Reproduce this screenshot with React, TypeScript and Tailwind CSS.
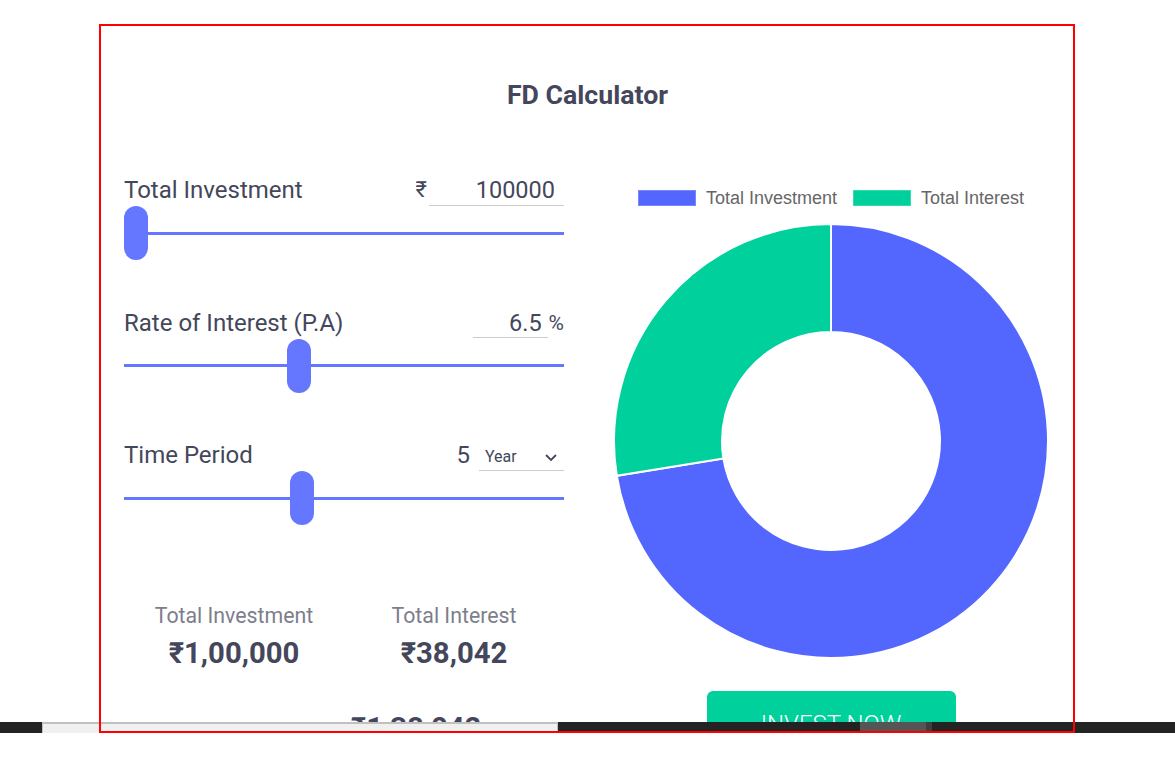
import React from "react";

const BLUE = "#5367ff";
const GREEN = "#00d09c";

// donut slice path, angles clockwise from 12 o'clock
function slice(cx: number, cy: number, r0: number, r1: number, a0: number, a1: number) {
  const pt = (r: number, a: number) => `${cx + r * Math.sin(a)} ${cy - r * Math.cos(a)}`;
  const large = a1 - a0 > Math.PI ? 1 : 0;
  return `M ${pt(r1, a0)} A ${r1} ${r1} 0 ${large} 1 ${pt(r1, a1)} L ${pt(r0, a1)} A ${r0} ${r0} 0 ${large} 0 ${pt(r0, a0)} Z`;
}

const Slider = ({ pos }: { pos: number }) => (
  <div className="relative flex h-[54px] items-center">
    <div className="h-[3px] w-full bg-[#6576ff]" />
    <div
      className="absolute top-0 h-[54px] w-6 rounded-full bg-[#6576ff]"
      style={{ left: `${pos * 416}px` }}
    />
  </div>
);

const Donut = () => {
  const invested = 100000;
  const interest = 38042;
  const split = (invested / (invested + interest)) * Math.PI * 2;
  return (
    <svg width="436" height="436" viewBox="0 0 436 436">
      <path d={slice(218, 218, 109, 217, 0, split)} fill={BLUE} stroke="#fff" strokeWidth="2" />
      <path d={slice(218, 218, 109, 217, split, Math.PI * 2)} fill={GREEN} stroke="#fff" strokeWidth="2" />
    </svg>
  );
};

export default function App() {
  return (
    <div className="relative h-[758px] w-[1175px] overflow-hidden bg-white font-[family-name:Roboto,sans-serif] text-[#44475b]">
      <div className="ml-[101px] mt-[26px] h-[707px] w-[973px] overflow-hidden">
        <h1 className="pt-[53px] text-center text-[26.7px] font-bold leading-8">FD Calculator</h1>

        <div className="flex">
          {/* inputs */}
          <div className="ml-[23px] mt-[63px] w-[440px]">
            <div className="flex flex-col gap-[46.5px]">
              <div>
                <div className="flex h-8 items-start justify-between">
                  <span className="text-[24px] leading-8">Total Investment</span>
                  <div className="flex items-start">
                    <span className="mr-[2px] text-[22px] leading-8">₹</span>
                    <div className="h-8 w-[135px] border-b border-[#cccccc] pr-[9px] text-right text-[23.5px] leading-8">
                      100000
                    </div>
                  </div>
                </div>
                <Slider pos={0} />
              </div>

              <div>
                <div className="flex h-8 items-start justify-between">
                  <span className="text-[24px] leading-8">Rate of Interest (P.A)</span>
                  <div className="flex items-start">
                    <div className="h-[31px] w-[75px] border-b border-[#cccccc] pr-[6px] text-right text-[23.5px] leading-8">
                      6.5
                    </div>
                    <span className="ml-[1px] text-[21px] leading-8">%</span>
                  </div>
                </div>
                <Slider pos={163 / 416} />
              </div>

              <div>
                <div className="flex h-8 items-start justify-between">
                  <span className="text-[24px] leading-8">Time Period</span>
                  <div className="flex items-start">
                    <span className="text-[24px] leading-8">5</span>
                    <div className="ml-[9px] flex h-8 w-[85px] items-start justify-between border-b border-[#cccccc] pl-[6px] pr-[7px]">
                      <span className="pt-1 text-[16px] leading-7">Year</span>
                      <svg width="12" height="8" viewBox="0 0 12 8" className="mt-[15px]">
                        <polyline points="1,1 6,6 11,1" fill="none" stroke="#44475b" strokeWidth="1.8" />
                      </svg>
                    </div>
                  </div>
                </div>
                <Slider pos={166 / 416} />
              </div>
            </div>

            <div className="mt-[77px] grid grid-cols-2 text-center">
              <div>
                <div className="text-[21.3px] leading-7 text-[#7c7e8c]">Total Investment</div>
                <div className="mt-[5px] text-[29.3px] font-bold leading-9">₹1,00,000</div>
              </div>
              <div>
                <div className="text-[21.3px] leading-7 text-[#7c7e8c]">Total Interest</div>
                <div className="mt-[5px] text-[29.3px] font-bold leading-9">₹38,042</div>
              </div>
            </div>

            <div className="mt-[39px] flex items-baseline pl-[110px]">
              <span className="translate-y-[3px] text-[21.3px] leading-7 text-[#7c7e8c]">Total Value</span>
              <span className="ml-[11px] text-[29.3px] font-bold leading-9">₹1,38,042</span>
            </div>
          </div>

          {/* chart */}
          <div className="ml-[50px] flex w-[434px] flex-col items-center">
            <div className="mt-[77px] flex h-5 items-center font-[family-name:'Liberation_Sans',Arial,sans-serif] text-[18px] text-[#666666]">
              <span className="h-4 w-[58px] border border-[#7586ff] bg-[#5367ff]" />
              <span className="ml-[10px]">Total Investment</span>
              <span className="ml-4 h-4 w-[58px] border border-[#33dab0] bg-[#00d09c]" />
              <span className="ml-[10px]">Total Interest</span>
            </div>
            <div className="mt-[15px]">
              <Donut />
            </div>
            <button className="mt-[32px] h-[66px] w-[249px] rounded-[6px] bg-[#00d09c] text-[24px] font-light text-white">
              INVEST NOW
            </button>
          </div>
        </div>
      </div>

      {/* scrollbar strip */}
      <div className="absolute left-0 top-[722px] flex h-[11px] w-full">
        <div className="w-[42px] bg-[#232323]" />
        <div className="w-[516px] border-x border-t-2 border-[#c0c0c0] bg-[#f0f0f0]" />
        <div className="flex flex-1 bg-[#232323]">
          <div className="ml-[302px] w-[66px] bg-[#555555]" />
          <div className="w-[6px] bg-[#3e3e3e]" />
        </div>
      </div>

      {/* highlight frame */}
      <div className="pointer-events-none absolute left-[99px] top-[24px] h-[709px] w-[976px] border-2 border-[#ff0000]" />
    </div>
  );
}
